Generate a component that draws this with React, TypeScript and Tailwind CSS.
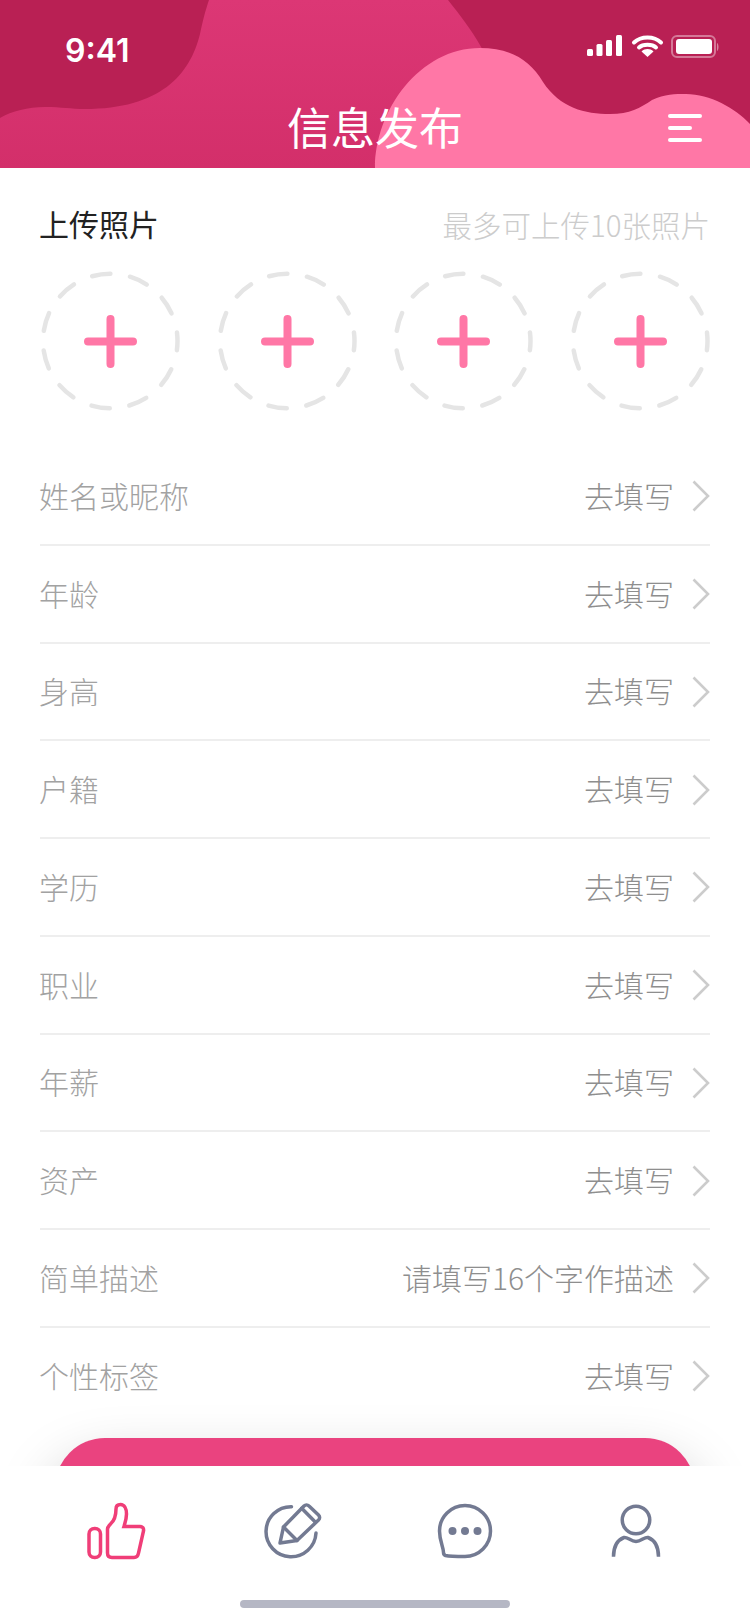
const rows = [
  { label: "姓名或昵称", value: "去填写" },
  { label: "年龄", value: "去填写" },
  { label: "身高", value: "去填写" },
  { label: "户籍", value: "去填写" },
  { label: "学历", value: "去填写" },
  { label: "职业", value: "去填写" },
  { label: "年薪", value: "去填写" },
  { label: "资产", value: "去填写" },
  { label: "简单描述", value: "请填写16个字作描述" },
  { label: "个性标签", value: "去填写" },
];

function HeaderWaves() {
  return (
    <svg className="absolute inset-0" width="750" height="168" viewBox="0 0 750 168">
      <defs>
        <linearGradient id="mid" x1="0" y1="0" x2="0" y2="1">
          <stop offset="0" stopColor="#DC3775" />
          <stop offset="1" stopColor="#D32F6A" />
        </linearGradient>
      </defs>
      <path
        d="M209 0 C205 12 203 20 200 34 C190 75 160 109 85 109 C70 109 62 107 45 107 C28 107 12 111 0 118 L0 168 L500 168 L500 100 C494 60 472 30 448 0 Z"
        fill="url(#mid)"
      />
      <path
        d="M375 168 C375 110 420 48 480 48 C510 48 530 60 543 82 C560 108 585 114 610 114 C630 114 640 108 652 100 C665 94 675 94 686 94 C710 94 735 108 750 124 L750 168 Z"
        fill="#FF77A6"
      />
    </svg>
  );
}

function StatusIcons() {
  return (
    <svg width="132" height="24" viewBox="0 0 132 24" className="block">
      <rect x="0" y="14" width="6" height="7" rx="1.5" fill="#fff" />
      <rect x="9.5" y="9" width="6" height="12" rx="1.5" fill="#fff" />
      <rect x="19" y="5" width="6" height="16" rx="1.5" fill="#fff" />
      <rect x="29" y="0" width="6" height="21" rx="1.5" fill="#fff" />
      <path d="M47 7.5 C54 0.8 67 0.8 74 7.5" fill="none" stroke="#fff" strokeWidth="4" strokeLinecap="round" />
      <path d="M52 12.5 C56 8.8 65 8.8 69 12.5" fill="none" stroke="#fff" strokeWidth="4" strokeLinecap="round" />
      <path d="M54.5 16.5 C58 13.3 63 13.3 66.5 16.5 L60.5 22 Z" fill="#fff" />
      <rect x="85" y="1" width="43" height="21" rx="5" fill="none" stroke="#fff" strokeOpacity="0.4" strokeWidth="2" />
      <rect x="89" y="4" width="36" height="15" rx="3" fill="#fff" />
      <path d="M130 8 L130 16 C132 15 132 9 130 8 Z" fill="#fff" fillOpacity="0.45" />
    </svg>
  );
}

function AddPhoto() {
  return (
    <svg width="140" height="140" viewBox="0 0 140 140" className="block">
      <circle
        cx="70.25"
        cy="70"
        r="67.25"
        fill="none"
        stroke="#E5E5E5"
        strokeWidth="4.5"
        strokeLinecap="round"
        strokeDasharray="18.5 19.91"
        strokeDashoffset="9.25"
      />
      <path d="M70.5 48 L70.5 93 M48 70.5 L93 70.5" stroke="#FF77A6" strokeWidth="8" strokeLinecap="round" />
    </svg>
  );
}

function Chevron() {
  return (
    <svg width="18" height="32" viewBox="0 0 18 32" className="block mt-[2px]">
      <path d="M1.5 1.5 L16 16 L1.5 30.5" fill="none" stroke="#CCCCCC" strokeWidth="2.6" />
    </svg>
  );
}

function ThumbIcon() {
  return (
    <svg width="64" height="64" viewBox="0 0 64 64" fill="none" stroke="#F03E78" strokeWidth="3.5">
      <rect x="5" y="28.5" width="11.5" height="29" rx="5.5" />
      <path d="M23.5 29 C23.5 27 25 25.5 26.5 24 C30 21 32 16.5 32 9 C32 6 34 4.5 36.5 4.5 C40.5 4.5 42.5 9 42.5 14 C42.5 18 41.5 22 40 26.5 L56 26.5 C58.5 26.5 60 28 59.5 31 L54.5 53 C54 56 52 57.5 50 57.5 L28 57.5 C25 57.5 23.5 55.5 23.5 53 Z" />
    </svg>
  );
}

function EditIcon() {
  return (
    <svg width="64" height="64" viewBox="0 0 64 64" fill="none" stroke="#737A92" strokeWidth="3.5" strokeLinecap="round" strokeLinejoin="round">
      <path d="M32.5 6.7 A25 25 0 1 0 57 33" />
      <path d="M21 43 L24.5 27 L45 6 C46.5 4.5 48.5 4.5 50 6 L59.5 15 C61 16.5 61 18.5 59.5 20 L38 40.5 Z" />
      <path d="M24.5 27 L38 40.5 M42.7 8.3 L56 21.7" />
    </svg>
  );
}

function MessageIcon() {
  return (
    <svg width="64" height="64" viewBox="0 0 64 64" fill="none" stroke="#737A92" strokeWidth="3.5">
      <path d="M32 5.5 C46 5.5 57.5 17 57.5 31 C57.5 45 46 56.5 32 56.5 C25 56.5 17 56.5 12.5 55.5 C11 55 10.5 54 10.5 52.5 C10.5 47 6.5 41 6.5 31 C6.5 17 18 5.5 32 5.5 Z" />
      <circle cx="19.5" cy="31" r="4" fill="#737A92" stroke="none" />
      <circle cx="32" cy="31" r="4" fill="#737A92" stroke="none" />
      <circle cx="44.5" cy="31" r="4" fill="#737A92" stroke="none" />
    </svg>
  );
}

function UserIcon() {
  return (
    <svg width="64" height="64" viewBox="0 0 64 64" fill="none" stroke="#737A92" strokeWidth="3.5">
      <circle cx="32" cy="20" r="13.75" />
      <path d="M9.5 56.7 C9.5 47 13.5 40 20 37.5 C23 36.5 27 41.5 32 41.5 C37 41.5 41 36.5 44 37.5 C50.5 40 54.5 47 54.5 56.7" />
    </svg>
  );
}

export default function App() {
  return (
    <div className="w-[750px] h-[1624px] flex flex-col bg-white overflow-hidden font-['Noto_Sans_CJK_SC','Liberation_Sans',sans-serif]">
      <header className="relative flex-none h-[168px] bg-[#B92054] overflow-hidden">
        <HeaderWaves />
        <div className="relative flex justify-between pt-[33px] pl-[65px] pr-[31px]">
          <span className="font-['Inter',sans-serif] font-semibold text-[32px] leading-9 text-white">9:41</span>
          <div className="pt-[2px]"><StatusIcons /></div>
        </div>
        <div className="relative flex justify-center items-center mt-[27px] h-[60px]">
          <h1 className="text-[44px] leading-[60px] text-white font-normal -mt-px">信息发布</h1>
          <div className="absolute right-[48px] top-[18px] flex flex-col gap-2">
            <div className="w-[34px] h-1 rounded-full bg-white" />
            <div className="w-6 h-1 rounded-full bg-white" />
            <div className="w-[34px] h-1 rounded-full bg-white" />
          </div>
        </div>
      </header>

      <main className="relative flex-1 min-h-0 overflow-hidden">
        <div className="px-10">
          <div className="flex justify-between items-center h-[75px] pt-[35px]">
            <span className="text-[30px] leading-10 text-[#222222] -ml-px">上传照片</span>
            <span className="text-[29.5px] leading-10 mt-[2px] text-[#CCCCCC] font-light">最多可上传10张照片</span>
          </div>
          <div className="flex justify-between mt-[28px]">
            <AddPhoto />
            <AddPhoto />
            <AddPhoto />
            <AddPhoto />
          </div>
          <div className="mt-[37px]">
            {rows.map((row, i) => (
              <div
                key={i}
                className={`flex items-center justify-between h-[97.75px] pb-px border-b-2 ${i < rows.length - 1 ? "border-[#EEEEEE]" : "border-transparent"}`}
              >
                <span className="text-[30px] text-[#A2A2A2] font-light -ml-px">{row.label}</span>
                <div className="flex items-center gap-[18px]">
                  <span className="text-[30px] text-[#8E8E8E] font-light">{row.value}</span>
                  <Chevron />
                </div>
              </div>
            ))}
          </div>
          <div className="mx-[15px] mt-[12px] h-[100px] rounded-[50px] bg-[#EA437F] shadow-[0_30px_60px_rgba(0,0,0,0.28)]" />
        </div>
      </main>

      <nav className="relative flex-none h-[158px] bg-white">
        <div className="flex pl-7 pt-[34px]">
          <div className="w-[176px] flex justify-center"><ThumbIcon /></div>
          <div className="w-[174px] flex justify-center"><EditIcon /></div>
          <div className="w-[174px] flex justify-center"><MessageIcon /></div>
          <div className="w-[168px] flex justify-center"><UserIcon /></div>
        </div>
        <div className="mx-auto mt-9 w-[270px] h-2 rounded-full bg-[#B5B7C4]" />
      </nav>
    </div>
  );
}
